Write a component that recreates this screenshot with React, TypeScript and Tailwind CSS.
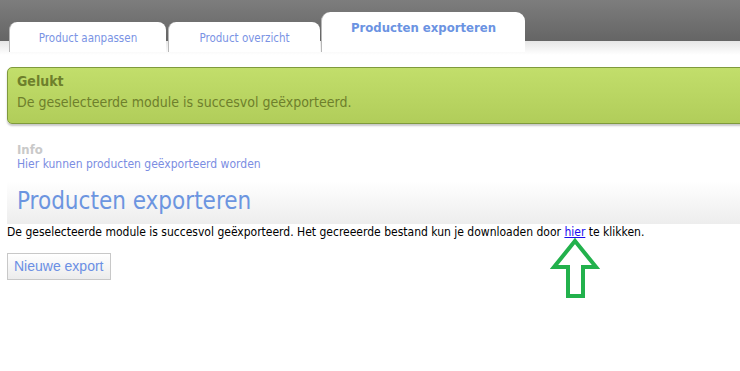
import React from 'react';

const font = { fontFamily: '"DejaVu Sans Condensed", "DejaVu Sans", Tahoma, sans-serif' };

function Tab({ label, width, active }: { label: string; width: string; active?: boolean }) {
  if (active) {
    return (
      <div className={`${width} shrink-0 h-[40px] rounded-t-[9px] bg-white border-l border-[#b8b8b8] pt-[6px] text-center text-[13px] font-bold text-[#6b93e2]`}>
        {label}
      </div>
    );
  }
  return (
    <div className={`${width} shrink-0 h-[30px] mt-[10px] rounded-t-[8px] bg-white border-l border-[#b8b8b8] pt-[8px] text-center text-[11.5px] text-[#7a93e4]`}>
      {label}
    </div>
  );
}

export default function App() {
  return (
    <div className="relative w-[740px] h-[371px] overflow-hidden bg-white" style={font}>
      {/* header with tabs */}
      <div className="h-[55px] bg-[linear-gradient(to_bottom,#7d7d7d_0px,#656565_41px,#e6e6e6_41px,#ffffff_55px)] flex items-start pt-[12px] pl-[9px]">
        <Tab label="Product aanpassen" width="w-[157px]" />
        <div className="w-[2px]" />
        <Tab label="Product overzicht" width="w-[152px]" />
        <div className="w-[1px]" />
        <Tab label="Producten exporteren" width="w-[204px]" active />
      </div>

      {/* success message */}
      <div className="ml-[7px] mr-[-10px] mt-[12px] h-[57px] rounded-[5px] border border-[#7f9a3c] bg-gradient-to-b from-[#c2de6b] to-[#b1cd5a] shadow-[0_2px_2px_#c8c8c8] px-[9px] pt-[3px] text-[#6e7f2c]">
        <div className="text-[14px] font-bold leading-[20px]">Gelukt</div>
        <div className="text-[14px] leading-[20px] mt-[1px]">De geselecteerde module is succesvol geëxporteerd.</div>
      </div>

      {/* info */}
      <div className="ml-[17px] mt-[18px]">
        <div className="text-[13px] font-bold leading-[15px] text-[#c9c9c9]">Info</div>
        <div className="text-[12px] leading-[14px] text-[#7b8de2]">Hier kunnen producten geëxporteerd worden</div>
      </div>

      {/* title */}
      <div className="ml-[7px] mt-[10px] h-[43px] bg-gradient-to-b from-white to-[#ededed] pl-[10px] pt-[5px]">
        <h1 className="text-[24px] leading-[30px] text-[#6c95e0]">Producten exporteren</h1>
      </div>

      <p className="ml-[7px] text-[12px] leading-[16px] text-black">
        De geselecteerde module is succesvol geëxporteerd. Het gecreeerde bestand kun je downloaden door{' '}
        <a href="#" className="text-[#1a0dee] underline">hier</a> te klikken.
      </p>

      <button
        className="ml-[7px] mt-[13px] h-[27px] px-[6px] border border-[#c8c8c8] bg-gradient-to-b from-white to-[#ececec] text-[14px] text-[#6b8fe4]"
        style={{ fontFamily: '"Liberation Sans", Arial, sans-serif' }}
      >
        Nieuwe export
      </button>

      {/* annotation arrow */}
      <svg className="absolute left-0 top-0" width="740" height="371">
        <polygon
          points="575,241 596,267 583,267 583,296 568,296 568,267 554,267"
          fill="none"
          stroke="#22b14c"
          strokeWidth="4"
          strokeLinejoin="miter"
        />
      </svg>
    </div>
  );
}
